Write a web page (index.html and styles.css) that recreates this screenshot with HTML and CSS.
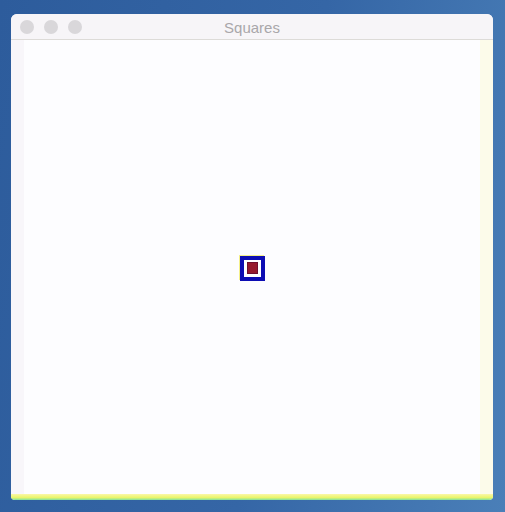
FILE: index.html
```html
<!DOCTYPE html>
<html>
<head>
<meta charset="utf-8">
<title>Squares</title>
<link rel="stylesheet" href="styles.css">
</head>
<body>
<div class="desktop">
  <div class="window">
    <div class="titlebar">
      <div class="lights">
        <span class="light"></span>
        <span class="light"></span>
        <span class="light"></span>
      </div>
      <div class="title">Squares</div>
    </div>
    <div class="body">
      <div class="strip left"></div>
      <div class="canvas">
        <div class="outer">
          <div class="inner"></div>
        </div>
      </div>
      <div class="strip right"></div>
    </div>
    <div class="bottom"></div>
  </div>
</div>
</body>
</html>
```
FILE: styles.css
```css
html, body {
  margin: 0;
  padding: 0;
  width: 505px;
  height: 512px;
  overflow: hidden;
}
.desktop {
  width: 505px;
  height: 512px;
  box-sizing: border-box;
  padding: 14px 0 0 11px;
  background: linear-gradient(100deg, #2d5c9c 0%, #3566a6 55%, #4a7fb8 100%);
  font-family: "Liberation Sans", Arial, sans-serif;
}
.window {
  width: 482px;
  height: 486px;
  display: flex;
  flex-direction: column;
  border-radius: 6px 6px 4px 4px;
  overflow: hidden;
  background: #f7f5f8;
}
.titlebar {
  height: 26px;
  flex: none;
  position: relative;
  display: flex;
  align-items: center;
  justify-content: center;
  background: #f7f5f8;
  border-bottom: 1px solid #dddbd8;
  box-sizing: border-box;
}
.lights {
  position: absolute;
  left: 9px;
  top: 6px;
  display: flex;
  gap: 10px;
}
.light {
  width: 14px;
  height: 14px;
  border-radius: 50%;
  background: #d9d7da;
}
.title {
  font-size: 15px;
  color: #a9a7aa;
  margin-top: 2px;
}
.body {
  flex: 1;
  display: flex;
}
.strip {
  width: 13px;
  flex: none;
}
.strip.left {
  background: #f8f6fa;
}
.strip.right {
  background: #fcfbea;
}
.canvas {
  flex: 1;
  background: #fdfdff;
  display: flex;
  align-items: center;
  justify-content: center;
  padding-top: 2px;
}
.outer {
  width: 17px;
  height: 17px;
  border: 4px solid #0d0db3;
  background: #ffffff;
  display: flex;
  align-items: center;
  justify-content: center;
  box-shadow: -1px -1px 0 #f5f08a;
}
.inner {
  width: 9px;
  height: 10px;
  background: #961a2e;
  border: 1px solid #6e1030;
}
.bottom {
  height: 6px;
  flex: none;
  background: linear-gradient(#fbf7a8, #e9f56a 60%, #7fe0a0);
}
```
